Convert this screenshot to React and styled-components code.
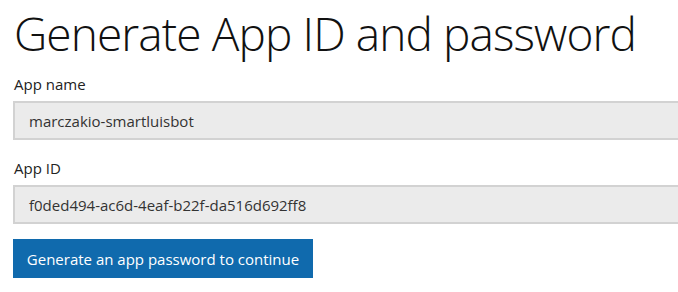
import styled, { createGlobalStyle } from "styled-components";

const GlobalStyle = createGlobalStyle`
  html, body {
    margin: 0;
    padding: 0;
    background: #ffffff;
    overflow: hidden;
  }
  body {
    font-family: "Open Sans", "Noto Sans", sans-serif;
    color: #000;
  }
`;

const Page = styled.div`
  padding: 0 0 0 13px;
  width: 665px;
  overflow: hidden;
`;

const Title = styled.h1`
  margin: 4px 0 0 1px;
  font-size: 46px;
  font-weight: 300;
  line-height: 58px;
  letter-spacing: -0.9px;
  white-space: nowrap;
  color: #111;
`;

const Field = styled.div`
  display: flex;
  flex-direction: column;
  margin-top: ${(p) => p.$top}px;
`;

const Label = styled.label`
  font-size: 15px;
  line-height: 20px;
  color: #222;
  margin: 0 0 7px 1px;
`;

const Input = styled.div`
  box-sizing: border-box;
  height: 39px;
  width: 700px;
  padding: 0 14px;
  display: flex;
  align-items: center;
  background: #ebebeb;
  border: 2px solid #d2d2d2;
  border-right: none;
  font-size: 15px;
  color: #333;
`;

const Button = styled.button`
  margin-top: 15px;
  box-sizing: border-box;
  width: 300px;
  height: 39px;
  border: none;
  background: #106aad;
  color: #fff;
  font-family: "Open Sans", "Noto Sans", sans-serif;
  font-size: 15px;
  padding: 0;
  display: flex;
  align-items: center;
  justify-content: center;
  cursor: pointer;
`;

export default function App() {
  return (
    <>
      <GlobalStyle />
      <Page>
        <Title>Generate App ID and password</Title>
        <Field $top={12}>
          <Label>App name</Label>
          <Input>marczakio-smartluisbot</Input>
        </Field>
        <Field $top={18}>
          <Label>App ID</Label>
          <Input>f0ded494-ac6d-4eaf-b22f-da516d692ff8</Input>
        </Field>
        <Button>Generate an app password to continue</Button>
      </Page>
    </>
  );
}
